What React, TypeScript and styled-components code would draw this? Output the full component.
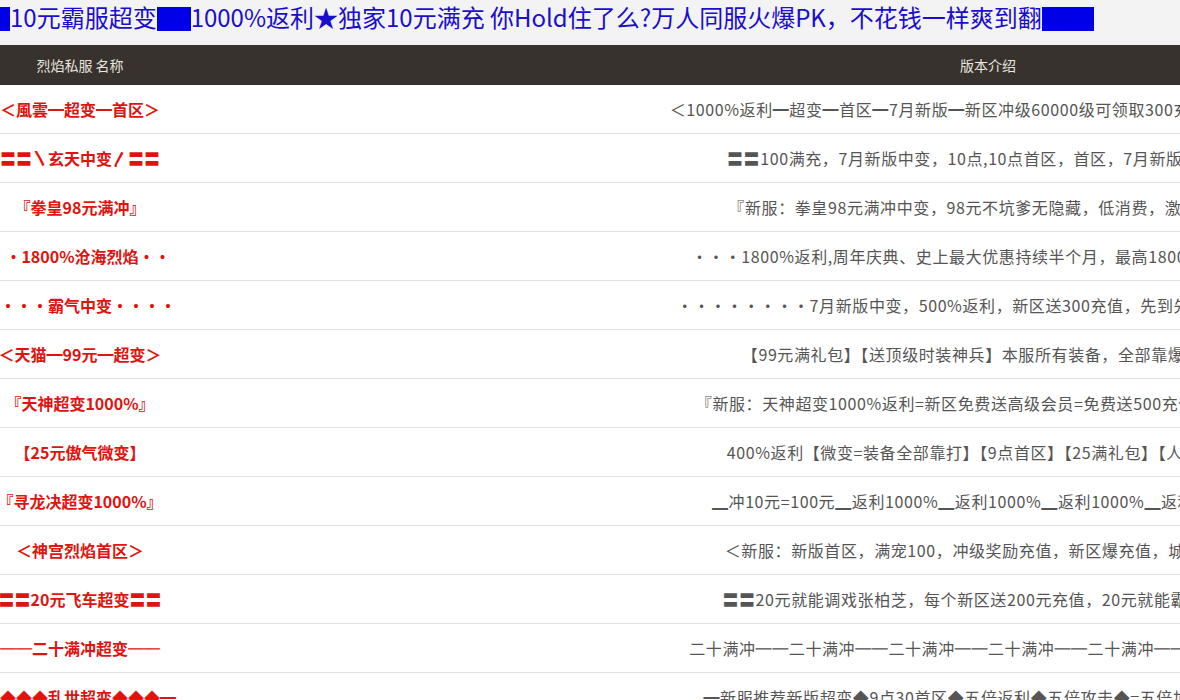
import styled, { createGlobalStyle } from "styled-components";

const Global = createGlobalStyle`
  body {
    margin: 0;
    background: #fff;
    font-family: "Liberation Sans", "Noto Sans CJK SC", sans-serif;
    overflow: hidden;
  }
`;

const Page = styled.div`
  width: 1816px;
`;

const Title = styled.h1`
  margin: 0;
  height: 45px;
  line-height: 34px;
  background: #f3f3f3;
  color: #1a0dcc;
  font-size: 24px;
  font-weight: normal;
  white-space: nowrap;
  font-family: "Noto Sans CJK SC", sans-serif;
  letter-spacing: 0;
`;

const Block = styled.span<{ $w: number }>`
  display: inline-block;
  width: ${(p) => p.$w}px;
  height: 24px;
  background: #0000e6;
  vertical-align: -4px;
`;

const Table = styled.div`
  display: grid;
  grid-template-columns: 160px 1656px;
`;

const HeadCell = styled.div`
  background: #37322d;
  color: #e8e4df;
  height: 40px;
  line-height: 40px;
  font-size: 14px;
  text-align: center;
  font-family: "Noto Sans CJK SC", sans-serif;
`;

const Cell = styled.div<{ $name?: boolean }>`
  height: 48px;
  border-bottom: 1px solid #e2e2e2;
  display: flex;
  align-items: center;
  justify-content: center;
  white-space: nowrap;
  font-family: "Noto Sans CJK SC", sans-serif;
  font-size: 16px;
  letter-spacing: ${(p) => (p.$name ? "0" : "0.6px")};
  color: ${(p) => (p.$name ? "#e0140f" : "#555")};
  font-weight: ${(p) => (p.$name ? "bold" : "normal")};
`;

const rows: [string, string][] = [
  ["＜風雲━超变━首区＞", "＜1000%返利━超变━首区━7月新版━新区冲级60000级可领取300充值━首充翻倍＞"],
  ["〓〓〵玄天中变〳〓〓", "〓〓100满充，7月新版中变，10点,10点首区，首区，7月新版中变〓〓"],
  ["『拳皇98元满冲』", "『新服：拳皇98元满冲中变，98元不坑爹无隐藏，低消费，激情中变』"],
  ["••1800%沧海烈焰••", "•••1800%返利,周年庆典、史上最大优惠持续半个月，最高1800%返利•••"],
  ["••••霸气中变••••", "••••••••7月新版中变，500%返利，新区送300充值，先到先打，8点首区•"],
  ["＜天猫━99元━超变＞", "【99元满礼包】【送顶级时装神兵】本服所有装备，全部靠爆，取消"],
  ["『天神超变1000%』", "『新服：天神超变1000%返利=新区免费送高级会员=免费送500充值=9点首区』"],
  ["【25元傲气微变】", "400%返利【微变=装备全部靠打】【9点首区】【25满礼包】【人气火爆】"],
  ["『寻龙决超变1000%』", "▁冲10元=100元▁返利1000%▁返利1000%▁返利1000%▁返利1000%▁"],
  ["＜神宫烈焰首区＞", "＜新服：新版首区，满宠100，冲级奖励充值，新区爆充值，城站奖励＞"],
  ["〓〓20元飞车超变〓〓", "〓〓20元就能调戏张柏芝，每个新区送200元充值，20元就能霸服，〓〓"],
  ["══二十满冲超变══", "二十满冲══二十满冲══二十满冲══二十满冲══二十满冲══二十满冲══"],
  ["━◆◆◆乱世超变◆◆◆━", "━新服推荐新版超变◆9点30首区◆五倍返利◆五倍攻击◆=五倍加速◆千倍◆"],
];

export default function App() {
  return (
    <Page>
      <Global />
      <Title>
        <Block $w={10} />10元霸服超变<Block $w={34} />1000%返利★独家10元满充 你Hold住了么?万人同服火爆PK，不花钱一样爽到翻<Block $w={52} />
      </Title>
      <Table>
        <HeadCell>烈焰私服 名称</HeadCell>
        <HeadCell>版本介绍</HeadCell>
        {rows.map(([n, d]) => [
          <Cell $name key={"n" + n}>{n}</Cell>,
          <Cell key={"d" + d}>{d}</Cell>,
        ])}
      </Table>
    </Page>
  );
}
